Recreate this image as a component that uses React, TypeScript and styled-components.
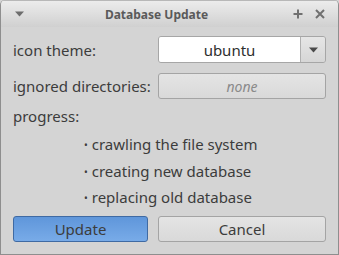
import React from "react";
import styled, { createGlobalStyle } from "styled-components";

const Global = createGlobalStyle`
  html, body {
    margin: 0;
    padding: 0;
    background: #d4d4d4;
  }
  body {
    font-family: "Noto Sans", "Open Sans", sans-serif;
  }
`;

const Window = styled.div`
  width: 339px;
  height: 255px;
  box-sizing: border-box;
  display: flex;
  flex-direction: column;
  background: #d4d4d4;
  border: 1px solid #8e8e8e;
  border-top: none;
  border-radius: 5px 5px 0 0;
  overflow: hidden;
`;

const TitleBar = styled.div`
  height: 27px;
  flex: none;
  display: flex;
  align-items: center;
  padding: 0 10px 0 10px;
  background: linear-gradient(#ececec, #d0d0d0);
  border-top: 1px solid #b8b8b8;
  box-sizing: border-box;
`;

const Title = styled.div`
  flex: 1;
  text-align: center;
  font-size: 12px;
  font-weight: bold;
  color: #5a5a5a;
  padding-right: 4px;
`;

const TitleIcon = styled.div`
  width: 16px;
  display: flex;
  justify-content: center;
  color: #6a6a6a;
`;

const Body = styled.div`
  flex: 1;
  padding: 9px 12px 12px 12px;
  display: flex;
  flex-direction: column;
`;

const Row = styled.div`
  display: flex;
  align-items: center;
  height: 27px;
  margin-bottom: 9px;
`;

const Label = styled.div`
  width: 145px;
  font-size: 15px;
  color: #3c3c3c;
`;

const Combo = styled.div`
  flex: 1;
  display: flex;
  height: 27px;
  box-sizing: border-box;
  border: 1px solid #a6a6a6;
  border-radius: 3px;
  overflow: hidden;
`;

const ComboValue = styled.div`
  flex: 1;
  background: #ffffff;
  display: flex;
  align-items: center;
  justify-content: center;
  font-size: 15px;
  color: #2e2e2e;
  border-right: 1px solid #b0b0b0;
`;

const ComboArrow = styled.div`
  width: 24px;
  background: linear-gradient(#e6e6e6, #d6d6d6);
  display: flex;
  align-items: center;
  justify-content: center;
`;

const Button = styled.button<{ $primary?: boolean; $width?: number }>`
  flex: ${(p) => (p.$width ? `0 0 ${p.$width}px` : "1")};
  height: 26px;
  box-sizing: border-box;
  border-radius: 3px;
  font-family: "Noto Sans", "Open Sans", sans-serif;
  font-size: 15px;
  padding: 0;
  color: #3c3c3c;
  border: 1px solid ${(p) => (p.$primary ? "#3f6aa3" : "#a4a4a4")};
  background: ${(p) =>
    p.$primary
      ? "linear-gradient(#5f96da, #78abe8)"
      : "linear-gradient(#e4e4e4, #d9d9d9)"};
`;

const Placeholder = styled.span`
  font-style: italic;
  color: #8a8a8a;
  font-size: 14px;
`;

const Progress = styled.div`
  font-size: 15px;
  color: #3c3c3c;
  margin-top: -2px;
`;

const Steps = styled.ul`
  list-style: none;
  margin: 5px 0 0 0;
  padding: 0 0 0 71px;
`;

const Step = styled.li`
  font-size: 15px;
  color: #3c3c3c;
  height: 26.5px;
  line-height: 26px;
  &::before {
    content: "•";
    font-size: 10px;
    margin-right: 4px;
    vertical-align: 1px;
  }
`;

const Buttons = styled.div`
  margin-top: auto;
  display: flex;
  gap: 10px;
`;

const Arrow = ({ color }: { color: string }) => (
  <svg width="9" height="6" viewBox="0 0 9 6">
    <path d="M0 0.5 H9 L4.5 5.5 Z" fill={color} />
  </svg>
);

export default function App() {
  return (
    <>
      <Global />
      <Window>
        <TitleBar>
          <TitleIcon>
            <Arrow color="#6d6d6d" />
          </TitleIcon>
          <Title>Database Update</Title>
          <TitleIcon>
            <svg width="10" height="10" viewBox="0 0 10 10">
              <path d="M5 0.5 V9.5 M0.5 5 H9.5" stroke="#707070" strokeWidth="2" />
            </svg>
          </TitleIcon>
          <TitleIcon style={{ marginLeft: 6 }}>
            <svg width="10" height="10" viewBox="0 0 10 10">
              <path d="M1 1 L9 9 M9 1 L1 9" stroke="#707070" strokeWidth="2" />
            </svg>
          </TitleIcon>
        </TitleBar>
        <Body>
          <Row>
            <Label>icon theme:</Label>
            <Combo>
              <ComboValue>ubuntu</ComboValue>
              <ComboArrow>
                <Arrow color="#4a4a4a" />
              </ComboArrow>
            </Combo>
          </Row>
          <Row>
            <Label>ignored directories:</Label>
            <Button>
              <Placeholder>none</Placeholder>
            </Button>
          </Row>
          <Progress>progress:</Progress>
          <Steps>
            <Step>crawling the file system</Step>
            <Step>creating new database</Step>
            <Step>replacing old database</Step>
          </Steps>
          <Buttons>
            <Button $primary $width={135}>Update</Button>
            <Button>Cancel</Button>
          </Buttons>
        </Body>
      </Window>
    </>
  );
}
